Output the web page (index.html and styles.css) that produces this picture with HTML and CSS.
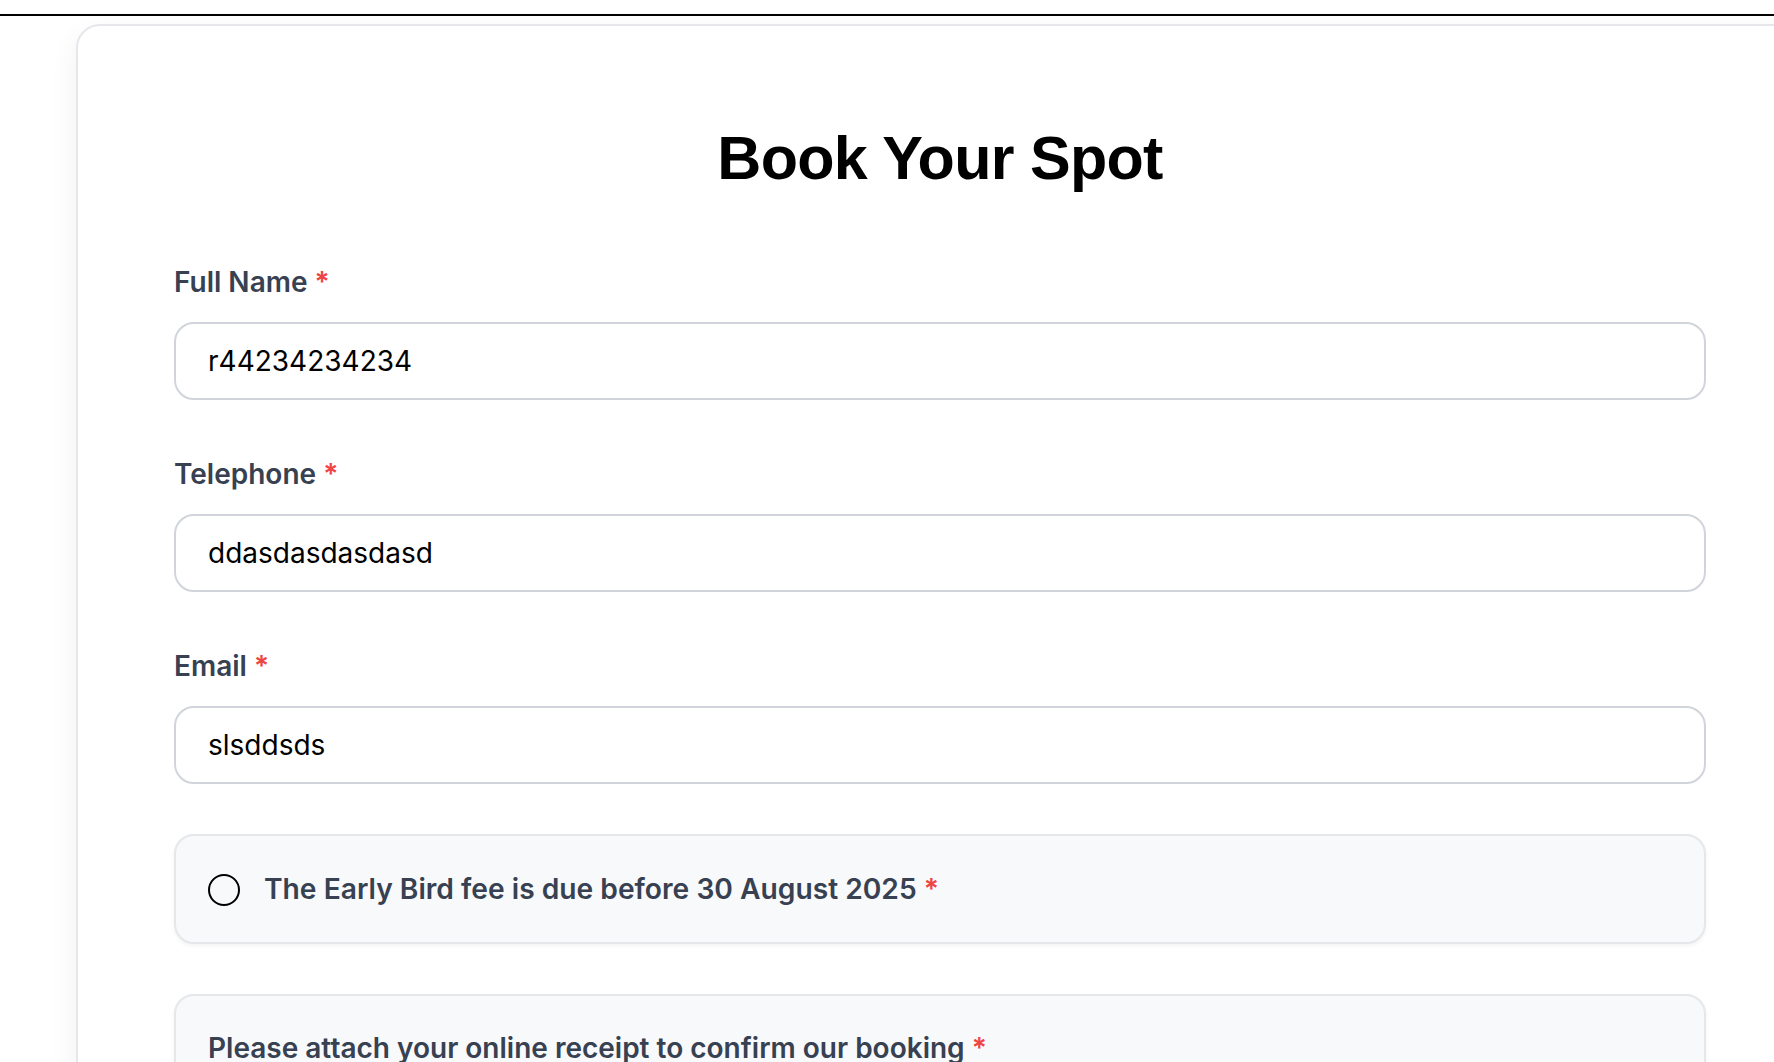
FILE: index.html
```html
<!DOCTYPE html>
<html lang="en">
<head>
<meta charset="utf-8">
<title>Book Your Spot</title>
<link rel="stylesheet" href="styles.css">
</head>
<body>
<div class="topbar"></div>
<main class="page">
  <section class="card">
    <h1 class="title">Book Your Spot</h1>
    <form class="form">
      <div class="field">
        <label class="label">Full Name <span class="req">*</span></label>
        <input class="input" type="text" value="r44234234234">
      </div>
      <div class="field">
        <label class="label">Telephone <span class="req">*</span></label>
        <input class="input" type="text" value="ddasdasdasdasd">
      </div>
      <div class="field">
        <label class="label">Email <span class="req">*</span></label>
        <input class="input" type="text" value="slsddsds">
      </div>
      <div class="panel radio-panel">
        <span class="radio"></span>
        <span class="panel-label radio-label">The Early Bird fee is due before 30 August 2025 <span class="req">*</span></span>
      </div>
      <div class="panel upload-panel">
        <p class="panel-label">Please attach your online receipt to confirm our booking <span class="req">*</span></p>
      </div>
    </form>
  </section>
</main>
</body>
</html>
```
FILE: styles.css
```css
html, body {
  margin: 0;
  padding: 0;
  background: #ffffff;
  overflow: hidden;
}
body {
  font-family: "Inter", "Noto Sans", sans-serif;
  width: 1774px;
  height: 1062px;
}
.topbar {
  margin-top: 14px;
  height: 2px;
  background: #000000;
}
.page {
  padding: 8px 0 0 76px;
}
.card {
  box-sizing: border-box;
  width: 1728px;
  border: 2px solid #e5e7eb;
  border-radius: 24px;
  background: #ffffff;
  padding: 96px;
  box-shadow: 0 10px 30px rgba(0, 0, 0, 0.06);
}
.title {
  margin: 0 0 68px;
  font-family: "Liberation Sans", Arial, sans-serif;
  font-weight: 700;
  font-size: 61px;
  line-height: 72px;
  letter-spacing: -0.7px;
  text-align: center;
  color: #000000;
}
.form {
  display: flex;
  flex-direction: column;
}
.field {
  display: flex;
  flex-direction: column;
  margin-bottom: 54px;
}
.field:nth-child(3) {
  margin-bottom: 50px;
}
.label {
  font-size: 28px;
  line-height: 40px;
  font-weight: 600;
  color: #374151;
  margin-bottom: 20px;
}
.req {
  color: #ef4444;
}
.input {
  box-sizing: border-box;
  height: 78px;
  border: 2px solid #d1d5db;
  border-radius: 20px;
  padding: 0 32px;
  font-family: "Inter", sans-serif;
  font-size: 28px;
  color: #000000;
  background: #ffffff;
  outline: none;
}
.panel {
  box-sizing: border-box;
  border: 2px solid #e5e7eb;
  border-radius: 20px;
  background: #f8f9fb;
  padding: 32px;
  box-shadow: 0 2px 4px rgba(0, 0, 0, 0.05);
}
.radio-panel {
  display: flex;
  align-items: center;
  gap: 24px;
  height: 110px;
  margin-bottom: 50px;
}
.radio {
  box-sizing: border-box;
  width: 32px;
  height: 32px;
  border: 2px solid #000000;
  border-radius: 50%;
  flex: none;
  margin-top: 2px;
}
.panel-label {
  margin: 0;
  font-size: 28px;
  line-height: 40px;
  font-weight: 600;
  color: #374151;
}
.radio-label {
  font-size: 28.2px;
}
.upload-panel {
  height: 200px;
}
```
